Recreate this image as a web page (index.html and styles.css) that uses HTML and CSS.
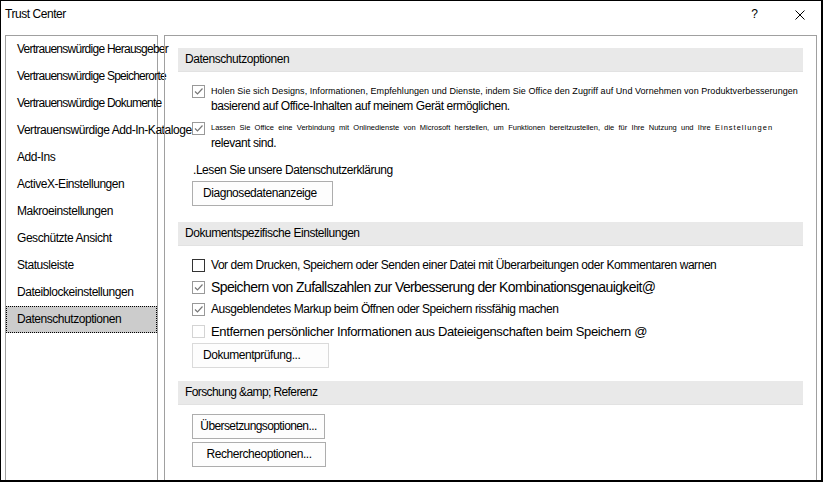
FILE: index.html
```html
<!DOCTYPE html>
<html lang="de">
<head>
  <meta charset="UTF-8">
  <title>Trust Center</title>
  <link rel="stylesheet" href="styles.css">
</head>
<body>
  <div class="window">
    <div class="titlebar">
      <span class="title">Trust Center</span>
      <span class="help">?</span>
      <svg class="close" width="10" height="10" viewBox="0 0 10 10">
        <path d="M0.5 0.5 L9.5 9.5 M9.5 0.5 L0.5 9.5" stroke="#000" stroke-width="1" fill="none"/>
      </svg>
    </div>

    <div class="dialog-body">
      <ul class="nav">
        <li class="tight">Vertrauenswürdige Herausgeber</li>
        <li class="tight">Vertrauenswürdige Speicherorte</li>
        <li class="tight">Vertrauenswürdige Dokumente</li>
        <li>Vertrauenswürdige Add-In-Kataloge</li>
        <li>Add-Ins</li>
        <li>ActiveX-Einstellungen</li>
        <li>Makroeinstellungen</li>
        <li>Geschützte Ansicht</li>
        <li>Statusleiste</li>
        <li>Dateiblockeinstellungen</li>
        <li class="selected">Datenschutzoptionen</li>
      </ul>

      <div class="pane">
        <div class="section-head">Datenschutzoptionen</div>
        <div class="section-body">
          <div class="option option-first">
            <span class="check checked"><svg viewBox="0 0 11 11"><path d="M2 5.5 L4.5 8 L9.5 2.5"/></svg></span>
            <div class="option-text">
              <div class="line-small">Holen Sie sich Designs, Informationen, Empfehlungen und Dienste, indem Sie Office den Zugriff auf Und Vornehmen von Produktverbesserungen</div>
              <div class="line-normal">basierend auf Office-Inhalten auf meinem Gerät ermöglichen.</div>
            </div>
          </div>
          <div class="option option-second">
            <span class="check checked"><svg viewBox="0 0 11 11"><path d="M2 5.5 L4.5 8 L9.5 2.5"/></svg></span>
            <div class="option-text">
              <div class="line-tiny">Lassen Sie Office eine Verbindung mit Onlinedienste von Microsoft herstellen, um Funktionen bereitzustellen, die für Ihre Nutzung und Ihre <span class="spaced">Einstellungen</span></div>
              <div class="line-normal">relevant sind.</div>
            </div>
          </div>
          <div class="privacy-link">.Lesen Sie unsere Datenschutzerklärung</div>
          <div class="btn btn-diag">Diagnosedatenanzeige</div>
        </div>

        <div class="section-head head-doc">Dokumentspezifische Einstellungen</div>
        <div class="section-body">
          <div class="rows">
            <div class="row">
              <span class="check"></span>
              <span>Vor dem Drucken, Speichern oder Senden einer Datei mit Überarbeitungen oder Kommentaren warnen</span>
            </div>
            <div class="row row-large">
              <span class="check checked"><svg viewBox="0 0 11 11"><path d="M2 5.5 L4.5 8 L9.5 2.5"/></svg></span>
              <span>Speichern von Zufallszahlen zur Verbesserung der Kombinationsgenauigkeit@</span>
            </div>
            <div class="row">
              <span class="check checked"><svg viewBox="0 0 11 11"><path d="M2 5.5 L4.5 8 L9.5 2.5"/></svg></span>
              <span>Ausgeblendetes Markup beim Öffnen oder Speichern rissfähig machen</span>
            </div>
            <div class="row row-medium">
              <span class="check disabled"></span>
              <span>Entfernen persönlicher Informationen aus Dateieigenschaften beim Speichern @</span>
            </div>
          </div>
          <div class="btn btn-inspect">Dokumentprüfung...</div>
        </div>

        <div class="section-head head-research">Forschung &amp;amp; Referenz</div>
        <div class="section-body">
          <div class="btn btn-translate">Übersetzungsoptionen...</div>
          <div class="btn btn-research">Rechercheoptionen...</div>
        </div>
      </div>
    </div>
  </div>
</body>
</html>
```

FILE: styles.css
```css
:root {
  --panel-border: #a0a0a0;
  --head-bg: #e9e9e9;
  --text-color: #000000;
  --btn-border: #adadad;
}

* {
  box-sizing: border-box;
}

body {
  margin: 0;
  width: 823px;
  height: 482px;
  overflow: hidden;
  background: #ffffff;
  font-family: "Liberation Sans", Arial, sans-serif;
  font-size: 12px;
  letter-spacing: -0.45px;
  color: var(--text-color);
}

.window {
  width: 823px;
  height: 482px;
  border-style: solid;
  border-color: #000;
  border-width: 1px 2px 2px 1px;
  overflow: hidden;
}

/* title bar */
.titlebar {
  display: flex;
  align-items: flex-start;
  height: 34px;
  padding: 5px 16px 0 4px;
  line-height: 16px;
}

.title {
  flex: 1;
}

.help {
  margin-right: 37px;
  letter-spacing: 0;
}

.close {
  margin-top: 4px;
}

/* two panes */
.dialog-body {
  display: flex;
  gap: 6px;
  height: 445px;
  padding: 0 4px;
}

.nav {
  width: 153px;
  margin: 0;
  padding: 0;
  list-style: none;
  border: 1px solid var(--panel-border);
  border-bottom: none;
}

.nav li {
  height: 27px;
  line-height: 25px;
  padding-left: 10px;
  border: 1px solid transparent;
  white-space: nowrap;
}

.nav li.tight {
  letter-spacing: -0.75px;
}

.nav li.selected {
  background-color: #cccccc;
  border: 1px dotted #000;
}

.pane {
  width: 653px;
  padding: 12px 13px 0 13px;
  border: 1px solid var(--panel-border);
  border-bottom: none;
}

.section-head {
  height: 24px;
  line-height: 23px;
  padding-left: 7px;
  background-color: var(--head-bg);
  border-bottom: 1px solid #e2e2e2;
}

.head-doc {
  margin-top: 16px;
}

.head-research {
  margin-top: 13px;
  letter-spacing: -0.6px;
}

.section-body {
  padding-left: 14px;
}

/* checkboxes */
.check {
  flex: none;
  width: 13px;
  height: 13px;
  border: 1px solid #333;
  background: #fff;
}

.check.checked {
  border-color: #999;
}

.check.disabled {
  border-color: #d4d4d4;
}

.check svg {
  display: block;
  width: 11px;
  height: 11px;
}

.check svg path {
  fill: none;
  stroke: #777;
  stroke-width: 1.2;
}

.option {
  display: flex;
  gap: 6px;
  white-space: nowrap;
}

.option .check {
  margin-top: 1px;
}

.option-first {
  margin-top: 12px;
}

.option-second {
  margin-top: 7px;
}

.line-small {
  font-size: 9px;
  line-height: 14px;
  letter-spacing: 0.05px;
}

.line-tiny {
  font-size: 7.5px;
  line-height: 14px;
  letter-spacing: 0;
  word-spacing: 2.2px;
}

.line-tiny .spaced {
  letter-spacing: 1px;
}

.line-normal {
  font-size: 12px;
  line-height: 16px;
}

.privacy-link {
  margin: 11px 0 0 1px;
  line-height: 16px;
}

.rows {
  margin-top: 8px;
}

.row {
  display: flex;
  align-items: center;
  gap: 6px;
  height: 22px;
  white-space: nowrap;
}

.row-large {
  font-size: 14px;
  letter-spacing: -0.6px;
}

.row-medium {
  font-size: 13px;
  letter-spacing: -0.37px;
}

/* buttons */
.btn {
  height: 25px;
  line-height: 23px;
  border: 1px solid var(--btn-border);
  background-color: #fdfdfd;
  white-space: nowrap;
}

.btn-diag {
  width: 141px;
  margin-top: 3px;
  padding-left: 10px;
}

.btn-inspect {
  width: 137px;
  margin-top: 1px;
  padding-left: 10px;
  border-color: #dadada;
}

.btn-translate {
  width: 133px;
  margin-top: 9px;
  text-align: center;
  letter-spacing: -0.6px;
}

.btn-research {
  width: 134px;
  margin-top: 3px;
  text-align: center;
}
```
